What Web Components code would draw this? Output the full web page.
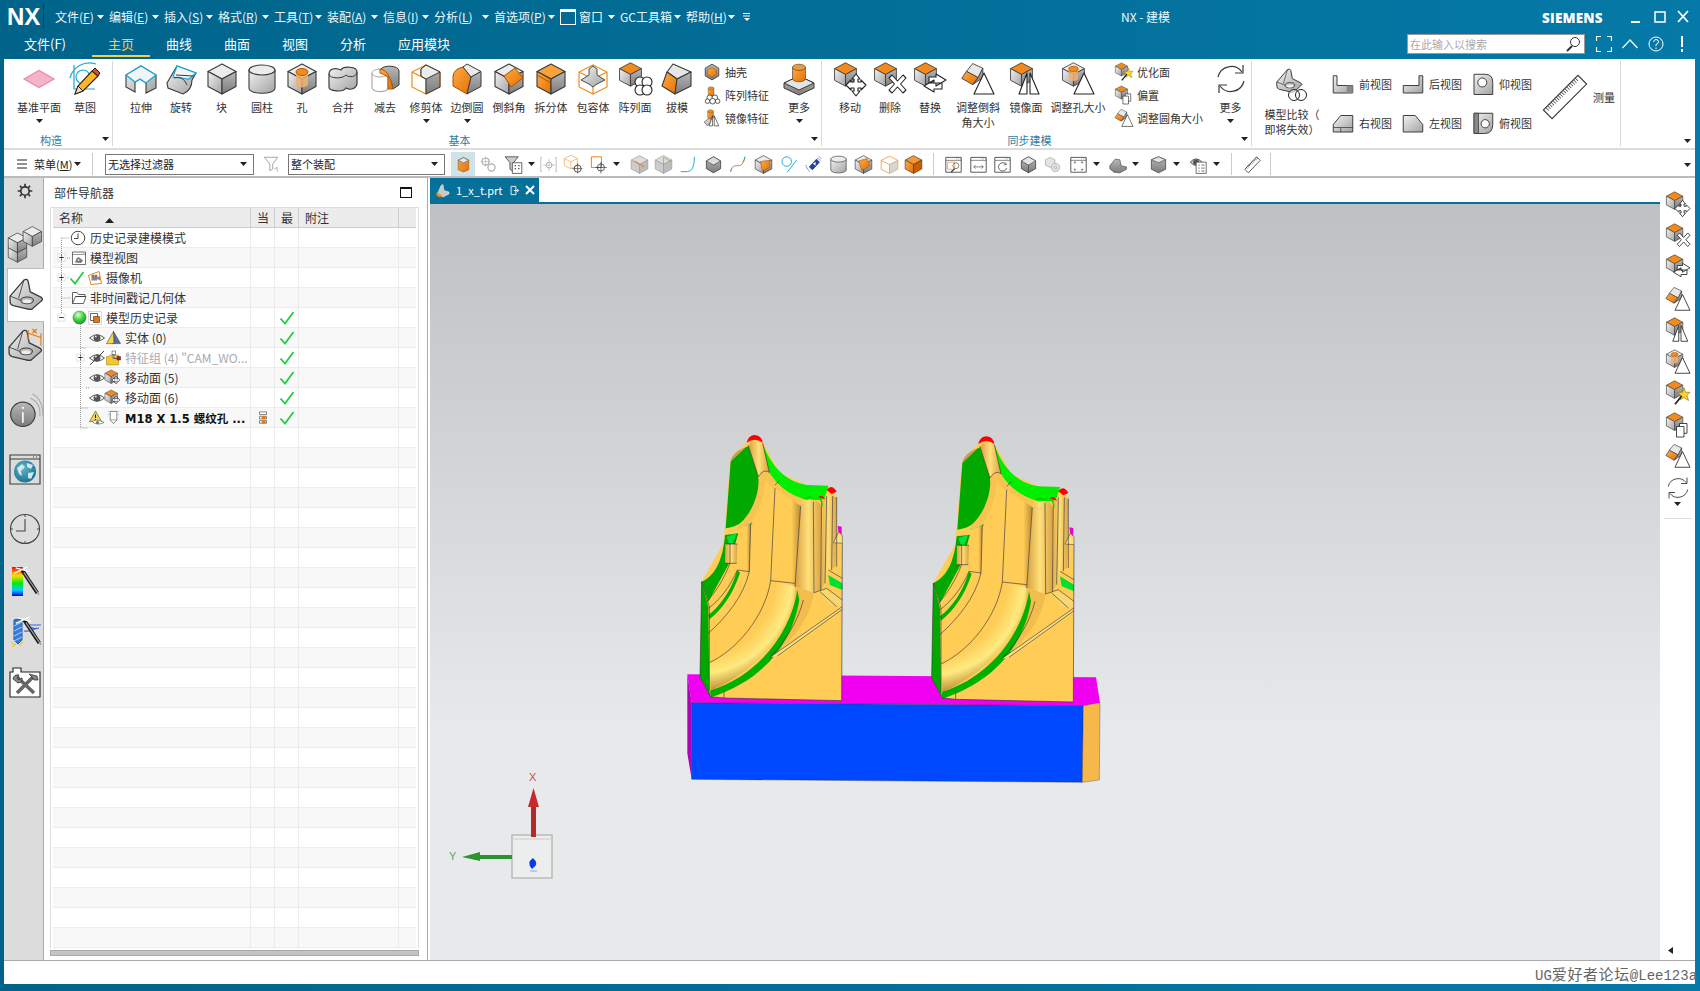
<!DOCTYPE html>
<html lang="zh">
<head>
<meta charset="utf-8">
<title>NX - 建模</title>
<style>
  html, body { margin: 0; height: 991px; overflow: hidden; }
  body { font-family: "Noto Sans CJK SC", "Noto Sans", sans-serif; font-size: 11px; color: #333; }
</style>
</head>
<body>
<nx-window>
  <nx-titlebar slot="top"></nx-titlebar>
  <nx-tabs slot="top"></nx-tabs>
  <nx-ribbon slot="content"></nx-ribbon>
  <nx-selbar slot="content"></nx-selbar>
  <nx-main slot="content"></nx-main>
  <nx-status slot="content"></nx-status>
</nx-window>

<script>
const S = "#3a3a3a";
const DEFS = `<defs>
  <linearGradient id="gl" x1="0" y1="0" x2="1" y2="1"><stop offset="0" stop-color="#f2f2f2"/><stop offset="1" stop-color="#a2a2a2"/></linearGradient>
  <linearGradient id="gr" x1="0" y1="0" x2="0" y2="1"><stop offset="0" stop-color="#b8b8b8"/><stop offset="1" stop-color="#7c7c7c"/></linearGradient>
  <linearGradient id="o" x1="0" y1="0" x2="1" y2="1"><stop offset="0" stop-color="#ffab45"/><stop offset="1" stop-color="#e46f05"/></linearGradient>
  <radialGradient id="ball" cx=".4" cy=".3" r=".8"><stop offset="0" stop-color="#d8ffd0"/><stop offset=".5" stop-color="#3fd33f"/><stop offset="1" stop-color="#0a8a1a"/></radialGradient>
  <linearGradient id="rb" x1="0" y1="0" x2="0" y2="1"><stop offset="0" stop-color="#f00"/><stop offset=".3" stop-color="#fd0"/><stop offset=".55" stop-color="#0e0"/><stop offset=".8" stop-color="#0cf"/><stop offset="1" stop-color="#00d"/></linearGradient>
  <radialGradient id="earth" cx=".4" cy=".35" r=".8"><stop offset="0" stop-color="#5fb4cc"/><stop offset="1" stop-color="#0a6888"/></radialGradient>
</defs>`;

// faces of the isometric cube that most NX icons start from
const cube = (top = "#ececec", left = "url(#gl)", right = "url(#gr)") => `
  <g stroke="${S}" stroke-width="1.1" stroke-linejoin="round">
    <path d="M16 1 30 8.500 16 16 2 8.500Z" fill="${top}"/>
    <path d="M2 8.500 16 16V31L2 23.500Z" fill="${left}"/>
    <path d="M30 8.500 16 16V31L30 23.500Z" fill="${right}"/>
  </g>`;
const ocube = () => cube("#f28a1c");
const mini = (inner) => `<g transform="translate(-1 -1) scale(.78)">${inner}</g>`;
const W = `fill="#fff" stroke="#222" stroke-width="1.1" stroke-linejoin="round"`;
const arrows4 = `<path d="M22 11 26 16H24V19H27V17L32 22 27 27V25H24V28H26L22 33 18 28H20V25H17V27L12 22 17 17V19H20V16H18Z" ${W}/>`;
const cross = `<path d="M15 15 18 12 23.500 18 29 12 32 15 26.500 21 32 27 29 30 23.500 24 18 30 15 27 20.500 21Z" ${W}/>`;
const swap = `<path d="M22 11 32 17 22 23V20H15V14H22ZM20 17 10 23 20 29V26H28V20H20Z" ${W}/>`;
const tri = `<path d="M22 10 32 31H12Z" ${W}/>`;
const tri2 = `<path d="M17 10V31H9ZM20 10V31H29Z" ${W}/>`;
const star = `<path d="M24 9 26 15 32 15 28 19 30 26 24 22 19 25 20 19 15 15 22 15Z" fill="#ffd52a" stroke="#8a6a00" stroke-width=".8"/><path d="M21 20 12 31" stroke="#222" stroke-width="2.400"/>`;
const pages = `<path d="M18 14H28V27H18Z" ${W}/><path d="M14 18H24V32H14Z" ${W}/>`;
const rings = `<g fill="#fff" stroke="#222" stroke-width="1.1"><circle cx="21" cy="19" r="5"/><circle cx="28" cy="19" r="5"/><circle cx="21" cy="27" r="5"/><circle cx="28" cy="27" r="5"/></g>`;
const tilted = `<g stroke="${S}" stroke-width="1.1" stroke-linejoin="round"><path d="M15 2 28 8 22 20 7 12Z" fill="#e8e8e8"/><path d="M7 12 22 20 15 29 1 21Z" fill="url(#o)"/><path d="M22 20 28 8V20L15 29Z" fill="url(#gr)"/></g>`;
const holeCube = `${cube()}<path d="M10 8V22Q16 27 22 22V8Z" fill="#f0b070" opacity=".85"/><ellipse cx="16" cy="9" rx="6" ry="3.500" fill="#f28a1c" stroke="#b35c00"/>`;
const cyl = (f = "url(#gl)", t = "#ececec") => `<path d="M3 7V25C3 32 29 32 29 25V7Z" fill="${f}" stroke="${S}" stroke-width="1.1"/><ellipse cx="16" cy="7" rx="13" ry="5" fill="${t}" stroke="${S}" stroke-width="1.1"/>`;
const bracket = `<path d="M1 17 14 2Q17 0 18 3L20 13 30 18Q33 20 30 22L22 29Q20 30 17 29L4 26Q1 25 1 22Z" fill="url(#gl)" stroke="${S}" stroke-width="1.2" stroke-linejoin="round"/><path d="M1 17 11 21M14 2 9 19" fill="none" stroke="${S}" stroke-width=".8"/><ellipse cx="17" cy="21" rx="6" ry="3.200" fill="#bbb" stroke="${S}"/><ellipse cx="17" cy="22" rx="4" ry="1.800" fill="#eee"/>`;
const cycle = `<path d="M3 14A13.500 13.500 0 0 1 27 9" fill="none" stroke="${S}" stroke-width="1.200"/><path d="M29 18A13.500 13.500 0 0 1 5 23" fill="none" stroke="${S}" stroke-width="1.200"/><path d="M28 2V10H20M4 30V22H12" fill="none" stroke="${S}" stroke-width="1.200"/>`;
const eye = `<path d="M1 16Q16 3 31 16 16 29 1 16Z" fill="#fff" stroke="#444" stroke-width="1.800"/><circle cx="16" cy="16" r="7" fill="#555"/><circle cx="13.500" cy="13" r="2" fill="#ddd"/>`;
const check = `<path d="M3 17 12 27 29 4" fill="none" stroke="#22cc44" stroke-width="3.500"/>`;
const wand = `<path d="M10 3 27 29" stroke="#111" stroke-width="4"/><path d="M12 6 29 31" stroke="#999" stroke-width="1.500"/><path d="M10 3 3 1M10 3 16 0M10 3 1 7M10 3 18 5" stroke="#fff" stroke-width="1.500"/>`;
const panel = (inner) => `<path d="M3 4H29V29H3Z" fill="#fff" stroke="${S}" stroke-width="1.400"/><path d="M3 9H29M21 6.500H22M24 6.500H25M27 6.500H28" stroke="${S}"/>${inner}`;
const view = (d, extra = "") => `<path d="${d}" fill="url(#gl)" stroke="${S}" stroke-width="1.300" stroke-linejoin="round"/>${extra}`;
const wire = (c = "#f08a1c") => `<path d="M16 2 30 9V24L16 31 2 24V9ZM2 9 16 16 30 9M16 16V31" fill="none" stroke="${c}" stroke-width="1.200"/>`;

const ICONS = {
  datum: `<path d="M1 16 16 7.500 31 16 16 24.500Z" fill="#f6b2ca" stroke="#e48aad" stroke-width="1.200"/>`,
  sketch: `<g fill="none" stroke="#19a9d6" stroke-width="1.200"><path d="M5 2V26H26M1 15A20 20 0 0 1 27 1"/><circle cx="14" cy="14" r="7" fill="#fff"/></g><path d="M6 31 9 23 23 8 29 13 14 28Z" fill="#ffb52a" stroke="#222" stroke-width="1.100"/><path d="M6 31 9 23 14 28Z" fill="#f7dfb0" stroke="#222"/><path d="M23 8 26 5 31 10 29 13Z" fill="#d84a2a" stroke="#222"/>`,
  extrude: `<path d="M1 12V24L10 29V19L15 16 21 20V30L31 25V12L16 3Z" fill="url(#gl)" stroke="${S}" stroke-width="1.100"/><path d="M1 12 16 3 31 12 21 20 15 16 10 19Z" fill="#f0f6f8" stroke="#19a9d6" stroke-width="1.300"/>`,
  revolve: `<path d="M2 20 12 3 31 10 27 17Q27 27 18 31L3 25Z" fill="url(#gl)" stroke="${S}" stroke-width="1.100"/><path d="M8 14 12 3 31 10 24 16Z" fill="#f0f6f8" stroke="#19a9d6" stroke-width="1.200"/><path d="M11 12 28 13M9 15Q18 12 22 22" fill="none" stroke="${S}"/>`,
  block: cube(),
  cylinder: cyl(),
  hole: holeCube,
  unite: `<path d="M2 11V24C2 28 16 30 19 25 24 28 30 25 30 20V9C30 3 16 3 14 7 8 4 2 6 2 11Z" fill="url(#gl)" stroke="${S}" stroke-width="1.200"/><path d="M2 11C2 16 16 16 19 12 22 15 30 14 30 9" fill="none" stroke="${S}"/>`,
  subtract: `<path d="M3 10V24C3 30 19 30 19 25V12" fill="#fff" stroke="#aaa" stroke-width="1.200"/><ellipse cx="11" cy="10" rx="8" ry="4" fill="none" stroke="#aaa"/><path d="M12 6C14 2 30 2 30 8V22L24 26Q22 12 12 8Z" fill="url(#gr)" stroke="${S}"/><path d="M11 6Q20 6 24 26H19V14Q14 11 11 10Z" fill="url(#o)" stroke="#b35c00"/>`,
  trim: `${wire()}<path d="M16 2 30 9V24L16 31V16L11 13V6Z" fill="url(#gr)" stroke="${S}"/><path d="M16 2 30 9 16 16 11 13V6Z" fill="#ececec" stroke="${S}"/>`,
  edgeblend: `<path d="M2 23V13Q3 6 12 4L20 14 16 31Z" fill="url(#o)" stroke="#a85200"/><path d="M12 4 16 1 30 8.500 20 14Z" fill="#ececec" stroke="${S}"/><path d="M20 14 30 8.500V23.500L16 31Z" fill="url(#gr)" stroke="${S}"/>`,
  chamfer: `${cube()}<path d="M11 13 22 5 30 15 18 24Z" fill="url(#o)" stroke="#a85200"/>`,
  split: `${cube("#f8a33a", "url(#o)", "url(#gr)")}<path d="M2 12 16 20" fill="none" stroke="#a85200"/>`,
  wrap: `${wire()}<path d="M12 6 16 3 20 6V12L28 17 20 21 16 24 12 21 4 17 12 12Z" fill="url(#gl)" stroke="${S}" stroke-width=".9"/>`,
  patternface: `${mini(ocube())}${rings}`,
  draft: `<g stroke="${S}" stroke-width="1.100" stroke-linejoin="round"><path d="M12 1 30 9 16 16 6 9Z" fill="#e6e6e6"/><path d="M6 9 16 16 14 31 1 23Z" fill="url(#o)"/><path d="M30 9V23L14 31 16 16Z" fill="url(#gr)"/></g>`,
  shell: `<path d="M16 2 28 9V23L16 30 4 23V9Z" fill="url(#gr)" stroke="${S}" stroke-width="1.500"/><path d="M16 8 24 12V20L16 25 8 20V12Z" fill="url(#o)" stroke="#a85200"/>`,
  patternfeat: `<g transform="translate(8 0) scale(.4 .6)">${cyl("url(#o)", "#f28a1c")}</g><g fill="#fff" stroke="#222" stroke-width="1.300"><circle cx="12" cy="21" r="5"/><circle cx="21" cy="21" r="5"/><circle cx="8" cy="27" r="4"/><circle cx="17" cy="27" r="5"/><circle cx="26" cy="27" r="4"/></g>`,
  mirrorfeat: `<g transform="translate(7 0) scale(.4 .6)">${cyl("url(#o)", "#f28a1c")}</g><path d="M2 23 12 16 16 22 8 30Z" fill="url(#gl)" stroke="${S}"/><path d="M17 12V30H11ZM20 12V30H28Z" ${W}/>`,
  more: `<path d="M16 13 31 20V25L16 32 1 25V20Z" fill="url(#gr)" stroke="${S}"/><path d="M16 13 31 20 16 27 1 20Z" fill="#e4e4e4" stroke="${S}"/><g transform="translate(8 0) scale(.5 .62)">${cyl("url(#o)", "#f59a30")}</g>`,
  move: mini(ocube()) + arrows4,
  del: mini(ocube()) + cross,
  replace: mini(ocube()) + swap,
  chamsize: mini(tilted) + tri,
  mirrorface: mini(ocube()) + tri2,
  holesize: mini(holeCube) + tri,
  optimize: mini(ocube()) + star,
  offset: mini(ocube()) + pages,
  blendsize: mini(tilted) + tri,
  cycle,
  compare: `<g transform="translate(0 -2) scale(.82)">${bracket}</g><g fill="none" stroke="#222" stroke-width="1"><circle cx="18" cy="25" r="5.500" fill="#fff" fill-opacity=".6"/><circle cx="25" cy="25" r="5.500"/></g>`,
  vfront: view("M3 5H8V18H29V28H3Z", `<path d="M21 18H29V28H21Z" fill="#888"/>`),
  vback: view("M24 5H29V28H3V18H24Z"),
  vbottom: view("M4 3H19Q29 3 29 14V30H4Z", `<circle cx="15" cy="14" r="6" fill="#fff" stroke="${S}" stroke-width="1.300"/>`),
  vright: view("M3 18 13 6H29V28H3Z", `<path d="M3 22H29M13 22V28" stroke="${S}"/>`),
  vleft: view("M3 6H19L29 18V28H3Z"),
  vtop: view("M4 3H29V18Q29 30 18 30H4Z", `<path d="M4 3H10V30H4Z" fill="#888" stroke="${S}"/><circle cx="19" cy="17" r="5.500" fill="#fff" stroke="${S}" stroke-width="1.300"/>`),
  ruler: `<path d="M1 25 25 1 31 7 7 31Z" fill="#fff" stroke="${S}" stroke-width=".8"/><path d="M3.500 24.500 24.500 3.500" fill="none" stroke="${S}" stroke-width="3" stroke-dasharray=".5 1.200"/>`,
  filt: `<path d="M4 4H28L19 16V25L14 28V16Z" fill="#fff" stroke="#999" stroke-width="1.500"/><path d="M22 25 27 22V30" fill="none" stroke="#999" stroke-width="1.300"/>`,
  selcube: `<path d="M16 3 26 8V26L16 30 6 26V8Z" fill="url(#o)" stroke="#a85200"/><path d="M6 8 16 3 26 8 16 13Z" fill="#e8e8e8" stroke="${S}"/><path d="M6 14 16 19 26 14" fill="none" stroke="#888"/>`,
  link: `<g fill="none" stroke="#aaa" stroke-width="2"><circle cx="11" cy="11" r="6"/><circle cx="21" cy="21" r="6"/></g><path d="M11 3V19M3 11H19" stroke="#aaa"/>`,
  filtgrid: `<path d="M2 3H24L16 13V28L10 24V13Z" fill="#ccc" stroke="${S}" stroke-width="1.300"/><path d="M14 13H30V31H14Z" fill="#fff" stroke="${S}" stroke-width="1.300"/><path d="M18 18H20M24 18H26M18 23H20M24 23H26" stroke="${S}" stroke-width="2"/>`,
  snapdis: `<path d="M5 4H3V28H5M27 4H29V28H27" fill="none" stroke="#bbb" stroke-width="1.500"/><circle cx="17" cy="17" r="5" fill="none" stroke="#aaa" stroke-width="1.500"/><path d="M17 7V27M7 17H27" stroke="#aaa"/>`,
  wiretarget: `${mini(wire())}<circle cx="23" cy="23" r="6" fill="none" stroke="#222" stroke-width="1.200"/><path d="M23 14V31M14 23H31" stroke="#222"/>`,
  squaretarget: `<path d="M4 3H21V21H4Z" fill="#fff" stroke="#e8750a" stroke-width="1.500"/><circle cx="20" cy="21" r="6" fill="none" stroke="#222" stroke-width="1.200"/><path d="M20 12V31M11 21H30" stroke="#222"/>`,
  greycut: `${cube("#ddd", "#ccc", "#bbb").replaceAll(S, "#999")}<path d="M8 10 24 20" stroke="#e8750a" stroke-width="1.500"/>`,
  greywire: `${cube("#ddd", "#ccc", "#bbb").replaceAll(S, "#999")}<path d="M16 16V4L28 11" fill="none" stroke="#e8750a"/>`,
  curve: `<path d="M3 28H14Q26 28 26 3" fill="none" stroke="#19a9d6" stroke-width="1.600"/>`,
  plaincube: `<path d="M16 3 28 10V23L16 30 4 23V10Z" fill="url(#gr)" stroke="${S}" stroke-width="1.300"/><path d="M16 3 28 10 16 17 4 10Z" fill="#ddd" stroke="${S}"/>`,
  scurve: `<path d="M3 28Q4 17 14 18 24 20 27 3" fill="none" stroke="#e8750a" stroke-width="1.500"/><path d="M3 28Q3 24 5 22M23 12Q26 8 27 3" fill="none" stroke="#19a9d6" stroke-width="1.500"/>`,
  facecube: `${cube()}<path d="M11 11 26 9 27 21 14 27Z" fill="url(#o)" stroke="#a85200"/>`,
  ringline: `<circle cx="13" cy="11" r="8" fill="none" stroke="#19a9d6" stroke-width="1.600"/><path d="M14 29 30 8" stroke="#19a9d6" stroke-width="1.600"/>`,
  bluedia: `<path d="M9 20 21 7 26 12 14 25Z" fill="#2244aa" stroke="#112"/><path d="M15 14 20 12 19 18Z" fill="#fff"/><path d="M5 22 9 28M22 5 28 9M3 17 5 22M25 3 29 6" stroke="#4466cc" stroke-width="1.500" stroke-dasharray="2 1"/>`,
  cylplain: cyl(),
  cubeo2: `${cube()}<path d="M8 10 22 6 27 18 13 26Z" fill="url(#o)" stroke="#a85200"/>`,
  cubewire: `${wire()}<path d="M16 16 30 9V24L16 31Z" fill="#bbb" fill-opacity=".6"/>`,
  cubesolid: `${cube("#f59a30", "url(#o)", "#c95f00")}`,
  pmag: panel(`<path d="M6 12H18V24H6Z" fill="#fff" stroke="#e8750a"/><circle cx="20" cy="18" r="5" fill="none" stroke="${S}"/><path d="M18 23 12 29" stroke="${S}" stroke-width="2"/>`),
  pfit: panel(`<path d="M8 20H24M8 20 11 17M8 20 11 23M24 20 21 17M24 20 21 23" fill="none" stroke="${S}"/>`),
  prot: panel(`<path d="M22 16A7 7 0 1 0 23 22" fill="none" stroke="${S}" stroke-width="1.300"/><path d="M20 12 23 16 18 17" fill="none" stroke="${S}"/>`),
  gcube: `<path d="M16 3 28 10V23L16 30 4 23V10Z" fill="url(#gr)" stroke="${S}" stroke-width="1.300"/><path d="M16 3 28 10 16 17 4 10Z" fill="#e6e6e6" stroke="${S}"/><path d="M16 17V30" stroke="${S}"/>`,
  gears: `<g fill="#e4e4e4" stroke="#aaa" stroke-width="1.300"><path d="M4 8 12 4 20 8V17L12 21 4 17Z"/><circle cx="21" cy="21" r="7"/><circle cx="21" cy="21" r="2.500"/></g>`,
  pframe: panel(`<path d="M9 14V12H12M23 14V12H20M9 23V25H12M23 23V25H20" fill="none" stroke="${S}" stroke-width="1.300"/>`),
  bracket2: `<path d="M3 23V18L12 7 20 8 22 18 31 20V24L20 30 10 29Z" fill="url(#gr)" stroke="${S}"/>`,
  cylshade: `<path d="M16 3 28 8V24L16 30 4 24V8Z" fill="url(#gr)" stroke="${S}" stroke-width="1.200"/><path d="M16 3 28 8 16 13 4 8Z" fill="#e4e4e4" stroke="${S}"/>`,
  eyelist: `<path d="M2 12Q12 1 22 12 12 23 2 12Z" fill="#ccc" stroke="${S}" stroke-width="1.300"/><circle cx="12" cy="12" r="5" fill="#555"/><path d="M12 12H29V31H12Z" fill="#fff" stroke="${S}" stroke-width="1.200"/><path d="M16 17H18M21 17H26M16 22H18M21 22H26M16 27H18M21 27H26" stroke="${S}" stroke-width="1.300"/>`,
  ruler2: `<path d="M3 24 23 3 29 9 9 30Z" fill="#fff" stroke="${S}" stroke-width="1.400"/><path d="M6 22 24 5" fill="none" stroke="${S}" stroke-width="3" stroke-dasharray="1 2"/>`,
  gear: `<circle cx="16" cy="16" r="7.500" fill="none" stroke="#333" stroke-width="3"/><path d="M16 3V8M16 24V29M3 16H8M24 16H29M7 7 10 10M22 22 25 25M25 7 22 10M10 22 7 25" stroke="#333" stroke-width="3"/>`,
  assembly: `<g transform="translate(-1 14) scale(.62)">${cube()}</g><g transform="translate(-1 5) scale(.62)">${cube()}</g><g transform="translate(13 -1) scale(.62)">${cube()}</g>`,
  bracket,
  bracketdim: `${bracket}<path d="M19 1V10M31 4V16M19 4 31 8M23 0 27 4M27 0 23 4" fill="none" stroke="#e8750a" stroke-width="1"/>`,
  info: `<path d="M21 5Q31 9 30 22M23 1Q33 6 33 22" fill="none" stroke="#aaa"/><circle cx="14" cy="20" r="11.500" fill="url(#gr)" stroke="#444" stroke-width="1.200"/><path d="M14 18V28" stroke="#fff" stroke-width="1.500"/><circle cx="14" cy="14" r="1" fill="#fff"/>`,
  globe: `<path d="M1 2H31V31H1Z" fill="#dcdcdc" stroke="${S}" stroke-width="1.100"/><path d="M1 6H31M24 4H25M27 4H28" stroke="${S}"/><circle cx="16" cy="18.500" r="11" fill="url(#earth)"/><path d="M8 15 13 11 16 14 12 18 13 23 10 21ZM18 10 24 12 22 16 18 14ZM19 20 25 19 22 26 19 25Z" fill="#d6e6e8"/>`,
  clock: `<circle cx="16" cy="16" r="14.500" fill="none" stroke="#444" stroke-width="1.100"/><path d="M16 6V18H7" fill="none" stroke="#444" stroke-width="1.100"/><path d="M16 1.500V4M16 28V30.500M1.500 16H4M28 16H30.500" stroke="#444"/>`,
  rainbow: `<path d="M3 1H14V30H3Z" fill="url(#rb)"/><g transform="translate(4 1) scale(.9)">${wand}</g>`,
  mill: `<path d="M5 4Q9 2 13 4V24L9 28 5 24Z" fill="#3a7ad8" stroke="#2458a8"/><path d="M5 10 13 6M5 15 13 11M5 20 13 16M5 25 13 21" stroke="#a8d0ff"/><path d="M17 9H32M17 9Q24 14 30 12M15 15Q22 16 28 12" fill="none" stroke="#3a6ad0" stroke-width="1.200"/><path d="M2 26 6 29M14 26 10 30M3 31 7 28" stroke="#e8d020" stroke-width="1.200"/><g transform="translate(6 1) scale(.9)">${wand}</g>`,
  tools: `<path d="M1 6H4V2H12V6H31V31H1Z" fill="#fff" stroke="#222" stroke-width="1.100"/><path d="M7 10 25 27M25 10 8 27" stroke="#666" stroke-width="3.600"/><path d="M4 13Q5 8 10 9L8 12 10 14 13 12Q14 16 9 17Z" fill="#888" stroke="#222" stroke-width=".7"/><path d="M20 8 28 10 29 14 25 14 23 11Z" fill="#888" stroke="#222" stroke-width=".7"/>`,
  tclock: `<circle cx="16" cy="16" r="13.500" fill="#fff" stroke="#333" stroke-width="1.800"/><path d="M16 7V17H8" fill="none" stroke="#333" stroke-width="1.800"/>`,
  tview: panel(`<path d="M8 25 11 17 15 14 19 17 24 21 20 26Z" fill="#777"/><circle cx="15" cy="20" r="2" fill="#ddd"/>`),
  plus: `<path d="M3 3H29V29H3Z" fill="#fff" stroke="#ccc" stroke-width="2"/><path d="M8 16H24M16 8V24" stroke="#111" stroke-width="3"/>`,
  minus: `<path d="M3 3H29V29H3Z" fill="#fff" stroke="#ccc" stroke-width="2"/><path d="M8 16H24" stroke="#111" stroke-width="3"/>`,
  check,
  cam: `<path d="M3 11 24 3 29 27 8 29Z" fill="#fff" stroke="#e8750a" stroke-width="1.800"/><path d="M9 13H20V21H9Z" fill="#888"/><circle cx="12" cy="12" r="3" fill="#777"/><circle cx="18" cy="12" r="3" fill="#777"/><path d="M20 15 26 12V21L20 18Z" fill="#888"/>`,
  folder: `<path d="M3 27V5H12L15 9H28V13H9L3 27H25L30 13H9" fill="#fff" stroke="#333" stroke-width="1.500" stroke-linejoin="round"/>`,
  ball: `<circle cx="16" cy="16" r="14" fill="url(#ball)" stroke="#3a7a3a"/>`,
  feat: `<path d="M3 3H29V29H3Z" fill="#fff" stroke="#888" stroke-dasharray="2 1"/><path d="M7 7H21V21H7Z" fill="#fff" stroke="#333" stroke-width="1.500"/><path d="M13 13H25V25H13Z" fill="#e8750a" stroke="#333" stroke-width="1.200"/>`,
  eye,
  eyeoff: `${eye}<path d="M2 30 30 2" stroke="#444" stroke-width="2"/>`,
  body: `<path d="M16 3 31 29H14Z" fill="#5a6aa8" stroke="#222"/><path d="M16 3 1 29H17Z" fill="#f7d64a" stroke="#222"/>`,
  fgroup: `<path d="M3 30V13H8L10 10H27V30Z" fill="#f6c62a" stroke="#9a7400"/><path d="M14 2H21V9H14ZM16 9V17H24" fill="#fff" stroke="#222"/><path d="M24 13H31V20H24Z" fill="#e01010" stroke="#222"/><path d="M18 10V16H23" fill="none" stroke="#1030e0" stroke-width="1.500"/>`,
  mvface: `<g transform="translate(-2 -1) scale(.9)">${ocube()}</g><path d="M22 12 25 15H23.500V18H26.500V16.500L30 20 26.500 23.500V22H23.500V25H25L22 28 19 25H20.500V22H17.500V23.500L14 20 17.500 16.500V18H20.500V15H19Z" ${W}/>`,
  warn: `<path d="M13 2 25 23H1Z" fill="#f7d64a" stroke="#444" stroke-width="1.200"/><path d="M13 9V16M13 18V20" stroke="#222" stroke-width="2"/><path d="M6 23Q16 17 30 25 16 32 6 23Z" fill="#fff" stroke="#555" stroke-width="1.300"/><circle cx="17" cy="25" r="3" fill="#666"/>`,
  holetool: `<path d="M9 3H23V21L16 29 9 21Z" fill="#fff" stroke="#444" stroke-width="1.300"/><path d="M5 3H7M25 3H27M5 10H7M25 10H27M9 21H23" stroke="#444"/>`,
  tree: `<path d="M8 2H24V8H8ZM8 12H24V18H8ZM8 22H24V28H8Z" fill="#fff" stroke="#333" stroke-width="1.300"/><path d="M13 12H22V18H13ZM13 22H22V28H13Z" fill="#e8750a"/>`,
  newwin: `<path d="M6 4H20V28H6Z" fill="none" stroke="#fff" stroke-width="2.500"/><path d="M14 16H28M28 16 23 11M28 16 23 21" fill="none" stroke="#fff" stroke-width="2.500"/>`,
  partfile: `<path d="M5 24 12 7 16 5 18 17 28 20V24L16 30Z" fill="#c9c9c9" stroke="#eee"/><path d="M3 20 14 27 10 31 3 27Z" fill="#f28a1c"/>`
};

class NxIcon extends HTMLElement {
  static get observedAttributes() { return ["name", "size", "h"]; }
  attributeChangedCallback() { if (this.shadowRoot) this.render(); }
  connectedCallback() {
    if (!this.shadowRoot) this.attachShadow({ mode: "open" });
    this.render();
  }
  render() {
    const size = this.getAttribute("size") || 32;
    const h = this.getAttribute("h") || size;
    this.shadowRoot.innerHTML = `
      <style>:host { display: inline-block; width: ${size}px; height: ${h}px; flex: none; line-height: 0; } svg { display: block; overflow: visible; }</style>
      <svg width="${size}" height="${h}" viewBox="0 0 32 32" preserveAspectRatio="none">${DEFS}
        ${ICONS[this.getAttribute("name")] || ""}</svg>`;
  }
}
customElements.define("nx-icon", NxIcon);

// little black triangle used everywhere a button drops down
const drop = (color = "#222") => `<svg width="7" height="4" viewBox="0 0 7 4" style="display:block;flex:none"><path d="M0 0H7L3.500 4Z" fill="${color}"/></svg>`;

class NxWindow extends HTMLElement {
  constructor() {
    super();
    this.attachShadow({ mode: "open" }).innerHTML = `
      <style>
        :host { display: block; width: 1700px; height: 991px; background: linear-gradient(90deg, #00648a, #0579a7); }
        .content { margin: 0 5px 0 4px; height: 925px; background: #fff; display: flex; flex-direction: column; }
      </style>
      <slot name="top"></slot>
      <div class="content"><slot name="content"></slot></div>`;
  }
}
customElements.define("nx-window", NxWindow);

class NxMenu extends HTMLElement {
  constructor() {
    super();
    this.attachShadow({ mode: "open" }).innerHTML = `
      <style>
        :host { display: inline-flex; align-items: center; justify-content: space-between; flex: none; padding-right: 5px; box-sizing: border-box; color: #eef6fa; font-size: 12px; white-space: nowrap; }
      </style>
      <span><slot></slot></span>${drop("#fff")}`;
  }
  connectedCallback() { this.style.width = this.getAttribute("w") + "px"; }
}
customElements.define("nx-menu", NxMenu);

class NxTitlebar extends HTMLElement {
  constructor() {
    super();
    const menus = [["文件", "F", 54], ["编辑", "E", 55], ["插入", "S", 54], ["格式", "R", 56], ["工具", "T", 53], ["装配", "A", 56], ["信息", "I", 51], ["分析", "L", 60], ["首选项", "P", 66]];
    this.attachShadow({ mode: "open" }).innerHTML = `
      <style>
        :host { display: flex; align-items: center; height: 33px; color: #fff; position: relative; }
        .logo { font: bold 24px "Liberation Sans", sans-serif; margin-left: 7px; width: 36px; letter-spacing: -.2px; }
        .bar { width: 1px; height: 23px; background: #0c3f57; margin-right: 11px; }
        .win { width: 16px; height: 16px; border: 1px solid #fff; box-sizing: border-box; margin-right: 3px; border-top-width: 3px; flex: none; }
        .title { position: absolute; left: 1121px; top: 8px; font-size: 12px; color: #eef6fa; white-space: nowrap; }
        .siemens { position: absolute; left: 1542px; top: 9px; font: 800 13.500px "Open Sans", sans-serif; letter-spacing: .2px; }
        .ctl { position: absolute; top: 10px; }
        .eq { margin-left: 3px; }
      </style>
      <div class="logo">NX</div><div class="bar"></div>
      ${menus.map(m => `<nx-menu w="${m[2]}">${m[0]}(<u>${m[1]}</u>)</nx-menu>`).join("")}
      <div class="win"></div>
      <nx-menu w="41">窗口</nx-menu><nx-menu w="66">GC工具箱</nx-menu><nx-menu w="54">帮助(<u>H</u>)</nx-menu>
      <svg class="eq" width="8" height="8" viewBox="0 0 8 8"><path d="M0 .5H7M0 3H7" stroke="#fff"/><path d="M1 5H7L4 8Z" fill="#fff"/></svg>
      <div class="title">NX - 建模</div>
      <div class="siemens">SIEMENS</div>
      <svg class="ctl" style="left:1631px" width="10" height="14"><path d="M0 12H9" stroke="#fff" stroke-width="2"/></svg>
      <svg class="ctl" style="left:1654px" width="12" height="14"><path d="M1 2H11V12H1Z" fill="none" stroke="#fff" stroke-width="1.500"/></svg>
      <svg class="ctl" style="left:1677px" width="12" height="14"><path d="M1 1 11 12M11 1 1 12" stroke="#fff" stroke-width="1.800"/></svg>`;
  }
}
customElements.define("nx-titlebar", NxTitlebar);

class NxTabs extends HTMLElement {
  constructor() {
    super();
    const tabs = [["文件(F)", 24, 42], ["主页", 108, 26], ["曲线", 166, 26], ["曲面", 224, 26], ["视图", 282, 26], ["分析", 340, 26], ["应用模块", 398, 52]];
    let x = 0;
    const html = tabs.map(([t, l, w], i) => {
      const gap = l - x;
      x = l + w;
      return `<span class="${i === 1 ? "on" : ""}" style="margin-left:${gap}px;width:${w}px">${t}</span>`;
    }).join("");
    this.attachShadow({ mode: "open" }).innerHTML = `
      <style>
        :host { display: flex; align-items: center; height: 26px; color: #fff; font-size: 13px; white-space: nowrap; position: relative; box-sizing: border-box; padding-bottom: 5px; }
        span { flex: none; line-height: 22px; }
        .on { color: #ffc94d; position: relative; }
        .on::after { content: ""; position: absolute; left: -16px; right: -16px; bottom: -2px; height: 2px; background: #ffc94d; }
        .search { position: absolute; left: 1407px; top: 1px; width: 178px; height: 20px; background: #fff; border: 1px solid #999; box-sizing: border-box; color: #aaa; font-size: 11px; line-height: 18px; padding-left: 2px; }
        .search svg { position: absolute; right: 3px; top: 1px; }
        .r { position: absolute; top: 3px; }
      </style>
      ${html}
      <div class="search">在此输入以搜索<svg width="16" height="16" viewBox="0 0 16 16"><circle cx="10" cy="6" r="4.500" fill="#fff" stroke="#333"/><path d="M7 10 2 15" stroke="#333" stroke-width="2"/></svg></div>
      <svg class="r" style="left:1596px" width="16" height="16" fill="none" stroke="#fff" stroke-width="1.200"><path d="M.5 5V.5H5M11 .5H15.500V5M.5 11V15.500H5M11 15.500H15.500V11"/></svg>
      <svg class="r" style="left:1622px" width="16" height="16" fill="none" stroke="#fff" stroke-width="1.200"><path d="M.5 12 8 4 15.500 12"/></svg>
      <svg class="r" style="left:1648px" width="16" height="16" fill="none" stroke="#fff"><circle cx="8" cy="8" r="7"/><path d="M5.500 6Q6 3.500 8 3.500 10.500 3.500 10.500 6 10.500 7.500 8 8.500V10M8 11.500V13"/></svg>
      <svg class="r" style="left:1680px" width="4" height="16" stroke="#fff" stroke-width="2"><path d="M2 0V11M2 13V16"/></svg>`;
  }
}
customElements.define("nx-tabs", NxTabs);

// big ribbon button: icon above a centred caption
class NxRbtn extends HTMLElement {
  constructor() {
    super();
    this.attachShadow({ mode: "open" }).innerHTML = `
      <style>
        :host { display: flex; flex-direction: column; align-items: center; flex: none; padding-top: 2px; box-sizing: border-box; }
        .t { margin-top: 0; line-height: 15px; text-align: center; color: #333; font-size: 11px; }
        svg { margin-top: 4px; }
        nx-icon { margin-bottom: 5px; }
      </style>
      <nx-icon></nx-icon><div class="t"><slot></slot></div>`;
  }
  connectedCallback() {
    this.style.width = this.getAttribute("w") + "px";
    const ic = this.shadowRoot.querySelector("nx-icon");
    ic.setAttribute("name", this.getAttribute("icon"));
    ic.setAttribute("size", this.getAttribute("size") || 32);
    if (this.hasAttribute("pt")) this.style.paddingTop = this.getAttribute("pt") + "px";
    if (this.hasAttribute("arrow")) this.shadowRoot.querySelector(".t").insertAdjacentHTML("afterend", drop());
  }
}
customElements.define("nx-rbtn", NxRbtn);

class NxSbtn extends HTMLElement {
  constructor() {
    super();
    this.attachShadow({ mode: "open" }).innerHTML = `
      <style>
        :host { display: flex; align-items: center; gap: 4px; height: 23px; white-space: nowrap; color: #333; font-size: 11px; }
      </style>
      <nx-icon size="18"></nx-icon><slot></slot>`;
  }
  connectedCallback() {
    this.shadowRoot.querySelector("nx-icon").setAttribute("name", this.getAttribute("icon"));
  }
}
customElements.define("nx-sbtn", NxSbtn);

class NxGroup extends HTMLElement {
  constructor() {
    super();
    this.attachShadow({ mode: "open" }).innerHTML = `
      <style>
        :host { display: flex; flex-direction: column; flex: none; box-sizing: border-box; border-right: 1px solid #d8d8d8; height: 85px; margin-top: 2px; position: relative; }
        .row { display: flex; flex: 1; }
        .label { position: absolute; left: 0; right: 0; bottom: -2px; height: 15px; line-height: 15px; text-align: center; color: #2f7da3; font-size: 11px; }
        .more { position: absolute; right: 3px; bottom: 5px; }
      </style>
      <div class="row"><slot></slot></div>`;
  }
  connectedCallback() {
    this.style.width = this.getAttribute("w") + "px";
    this.style.paddingLeft = (this.getAttribute("pl") || 8) + "px";
    const r = this.shadowRoot;
    if (this.hasAttribute("label")) r.querySelector(".row").insertAdjacentHTML("afterend", `<div class="label" style="padding-right:${this.getAttribute("lr") || 0}px">${this.getAttribute("label")}</div>`);
    if (this.hasAttribute("more")) r.querySelector(".row").insertAdjacentHTML("afterend", `<div class="more">${drop()}</div>`);
  }
}
customElements.define("nx-group", NxGroup);

class NxRibbon extends HTMLElement {
  constructor() {
    super();
    const b = (icon, t, w, arrow) => `<nx-rbtn icon="${icon}" w="${w}" ${arrow ? "arrow" : ""}>${t}</nx-rbtn>`;
    const col = (w, items) => `<div style="width:${w}px;flex:none;padding:0 0 0 5px;margin-top:-1px;box-sizing:border-box">${items.map(i => `<nx-sbtn icon="${i[0]}">${i[1]}</nx-sbtn>`).join("")}</div>`;
    this.attachShadow({ mode: "open" }).innerHTML = `
      <style>
        :host { display: flex; height: 89px; flex: none; border-bottom: 2px solid #dcdcdc; box-sizing: content-box; position: relative; }
        .views { display: grid; grid-template-columns: 70px 70px 70px; grid-auto-rows: 39px; padding: 3px 0 0 9px; flex: none; }
        .v { display: flex; align-items: center; gap: 4px; white-space: nowrap; font-size: 11px; color: #333; }
        .ruler { display: flex; align-items: center; gap: 5px; height: 72px; font-size: 11px; color: #333; flex: none; padding-left: 1px; }
        .end { position: absolute; right: 4px; bottom: 5px; }
      </style>
      <nx-group w="109" pl="12" label="构造" more lr="14">
        ${b("datum", "基准平面", 46, 1)}${b("sketch", "草图", 46)}
      </nx-group>
      <nx-group w="709" label="基本" more lr="15">
        ${b("extrude", "拉伸", 40)}${b("revolve", "旋转", 40)}${b("block", "块", 41)}${b("cylinder", "圆柱", 40)}${b("hole", "孔", 40)}
        ${b("unite", "合并", 42)}${b("subtract", "减去", 42)}${b("trim", "修剪体", 40, 1)}${b("edgeblend", "边倒圆", 42, 1)}${b("chamfer", "倒斜角", 42)}
        ${b("split", "拆分体", 42)}${b("wrap", "包容体", 42)}${b("patternface", "阵列面", 42)}${b("draft", "拔模", 42)}
        ${col(79, [["shell", "抽壳"], ["patternfeat", "阵列特征"], ["mirrorfeat", "镜像特征"]])}
        ${b("more", "更多", 44, 1)}
      </nx-group>
      <nx-group w="430" label="同步建模" more lr="14">
        ${b("move", "移动", 40)}${b("del", "删除", 40)}${b("replace", "替换", 40)}${b("chamsize", "调整倒斜<br>角大小", 56)}${b("mirrorface", "镜像面", 40)}${b("holesize", "调整孔大小", 64)}
        ${col(100, [["optimize", "优化面"], ["offset", "偏置"], ["blendsize", "调整圆角大小"]])}
        ${b("cycle", "更多", 41, 1)}
      </nx-group>
      <nx-group w="369" pl="10">
        <nx-rbtn icon="compare" w="60" pt="9">模型比较（<br>即将失效）</nx-rbtn>
        <div class="views">
          <div class="v"><nx-icon name="vfront" size="24"></nx-icon>前视图</div>
          <div class="v"><nx-icon name="vback" size="24"></nx-icon>后视图</div>
          <div class="v"><nx-icon name="vbottom" size="24"></nx-icon>仰视图</div>
          <div class="v"><nx-icon name="vright" size="24"></nx-icon>右视图</div>
          <div class="v"><nx-icon name="vleft" size="24"></nx-icon>左视图</div>
          <div class="v"><nx-icon name="vtop" size="24"></nx-icon>俯视图</div>
        </div>
        <div class="ruler"><nx-icon name="ruler" size="46"></nx-icon>测量</div>
      </nx-group>
      <div class="end">${drop()}</div>`;
  }
}
customElements.define("nx-ribbon", NxRibbon);

class NxDropdown extends HTMLElement {
  constructor() {
    super();
    this.attachShadow({ mode: "open" }).innerHTML = `
      <style>
        :host { display: flex; align-items: center; justify-content: space-between; height: 21px; box-sizing: border-box; border: 1px solid #777; padding: 0 6px 0 2px; flex: none; font-size: 11px; color: #222; background: #fff; }
      </style>
      <span><slot></slot></span>${drop()}`;
  }
  connectedCallback() { this.style.width = this.getAttribute("w") + "px"; }
}
customElements.define("nx-dropdown", NxDropdown);

class NxSelbar extends HTMLElement {
  constructor() {
    super();
    // icon, centre x in the window, has arrow; "|" entries are separators at an x
    const tools = [["selcube", 463, 0, 1], ["link", 488], ["filtgrid", 513, 1], ["snapdis", 548], ["wiretarget", 573], ["squaretarget", 598, 1], ["greycut", 639], ["greywire", 663], ["curve", 688], ["plaincube", 713], ["scurve", 738], ["facecube", 763], ["ringline", 788], ["bluedia", 813], ["cylplain", 838], ["cubeo2", 863], ["cubewire", 889], ["cubesolid", 913], ["|", 933], ["pmag", 953], ["pfit", 978], ["prot", 1002], ["gcube", 1028], ["gears", 1052], ["pframe", 1078, 1], ["bracket2", 1117, 1], ["cylshade", 1158, 1], ["eyelist", 1198, 1], ["|", 1231], ["ruler2", 1252], ["|", 1270]];
    let x = 445;
    const html = tools.map(t => {
      if (t[0] === "|") {
        const m = t[1] - x;
        x = t[1] + 1;
        return `<i class="sep" style="margin-left:${m}px"></i>`;
      }
      const left = t[1] - 12;
      const m = left - x;
      x = left + 24 + (t[2] ? 12 : 0);
      return `<span class="tool ${t[3] ? "on" : ""}" style="margin-left:${m}px"><nx-icon name="${t[0]}" size="${t[3] ? 17 : 19}"></nx-icon></span>${t[2] ? `<span class="ar">${drop()}</span>` : ""}`;
    }).join("");
    this.attachShadow({ mode: "open" }).innerHTML = `
      <style>
        :host { display: flex; align-items: center; height: 26px; flex: none; border-bottom: 2px solid #bbb; box-sizing: border-box; height: 28px; padding-top: 2px; position: relative; font-size: 11px; color: #222; }
        .ham { margin: 0 7px 0 13px; flex: none; }
        .menu { width: 47px; flex: none; display: flex; align-items: center; justify-content: space-between; }
        .tool { width: 24px; height: 24px; display: flex; align-items: center; justify-content: center; flex: none; }
        .on { background: #cfe3e9; }
        .ar { width: 12px; flex: none; display: flex; justify-content: center; }
        .sep { width: 1px; height: 22px; background: #ccc; flex: none; }
        .fn { width: 34px; display: flex; justify-content: center; flex: none; }
        .end { position: absolute; right: 4px; top: 13px; }
      </style>
      <svg class="ham" width="10" height="10"><path d="M0 1H10M0 5H10M0 9H10" stroke="#222"/></svg>
      <div class="menu"><span style="white-space:nowrap">菜单(<u>M</u>)</span>${drop()}</div>
      <i class="sep" style="margin:0 12px 0 11px"></i>
      <nx-dropdown w="149">无选择过滤器</nx-dropdown>
      <div class="fn"><nx-icon name="filt" size="18"></nx-icon></div>
      <nx-dropdown w="157">整个装配</nx-dropdown>
      ${html}
      <div class="end">${drop()}</div>`;
  }
}
customElements.define("nx-selbar", NxSelbar);

class NxResourceBar extends HTMLElement {
  constructor() {
    super();
    const items = [["gear", 18, 4, 0], ["assembly", 34, 27, 0], ["bracket", 34, 7, 1], ["bracketdim", 34, 7, 0], ["info", 34, 30, 0], ["globe", 32, 26, 0], ["clock", 32, 28, 0], ["rainbow", 32, 21, 0], ["mill", 32, 18, 0], ["tools", 32, 18, 0]];
    this.attachShadow({ mode: "open" }).innerHTML = `
      <style>
        :host { display: flex; flex-direction: column; align-items: center; width: 40px; flex: none; background: #dcdcdc; border-right: 1px solid #aaa; box-sizing: border-box; padding-left: 3px; }
        .it { display: flex; justify-content: center; flex: none; width: 100%; }
        .on { background: #fff; height: 54px; align-items: center; margin-left: 0; width: 37px; margin-right: -1px; border: 1px solid #bbb; border-right: none; box-sizing: border-box; }
      </style>
      ${items.map(i => `<div class="it ${i[3] ? "on" : ""}" style="margin-top:${i[2]}px"><nx-icon name="${i[0]}" size="${i[1]}"></nx-icon></div>`).join("")}`;
  }
}
customElements.define("nx-resource-bar", NxResourceBar);

const COLS = "198px 24px 24px 100px 19px";

class NxNavRow extends HTMLElement {
  connectedCallback() {
    if (this.shadowRoot) return;
    const specs = (this.getAttribute("icons") || "").split(",").filter(Boolean).map(s => s.split(":"));
    let x = 53;
    const icons = specs.map(([n, c, sz]) => {
      const left = +c - sz / 2;
      const html = `<nx-icon name="${n}" size="${sz}" style="margin-left:${left - x}px"></nx-icon>`;
      x = left + +sz;
      return html;
    }).join("");
    const lx = +this.getAttribute("lx") || x;
    const cls = this.getAttribute("kind") || "";
    this.attachShadow({ mode: "open" }).innerHTML = `
      <style>
        :host { display: grid; grid-template-columns: ${COLS}; height: 20px; box-sizing: border-box; border-bottom: 1px solid #ececec; flex: none; }
        :host(:nth-child(even)) { background: #f8f8f8; }
        .c { border-right: 1px solid #ececec; display: flex; align-items: center; justify-content: center; overflow: hidden; }
        .tree { justify-content: flex-start; white-space: nowrap; font-size: 12px; color: #333; }
        .dim { color: #aaa; }
        .bold { font-weight: bold; font-family: "DejaVu Sans", "Noto Sans CJK SC", sans-serif; font-size: 11.500px; color: #111; }
        .l { margin-left: ${lx - x}px; }
      </style>
      <div class="c tree">${icons}<span class="l ${cls}"><slot></slot></span></div>
      <div class="c">${this.hasAttribute("dep") ? `<nx-icon name="tree" size="14"></nx-icon>` : ""}</div>
      <div class="c">${this.hasAttribute("ok") ? `<nx-icon name="check" size="16"></nx-icon>` : ""}</div>
      <div class="c"></div><div class="c" style="border-right:none"></div>`;
  }
}
customElements.define("nx-nav-row", NxNavRow);

class NxNavigator extends HTMLElement {
  constructor() {
    super();
    const rows = [
      ["历史记录建模模式", "tclock:78:16", 90],
      ["模型视图", "plus:61:9,tview:79:16", 90],
      ["摄像机", "plus:61:9,check:77:16,cam:95:16", 106],
      ["非时间戳记几何体", "folder:79:16", 90],
      ["模型历史记录", "minus:61:9,ball:79:15,feat:95:16", 106, "ok"],
      ["实体 (0)", "eye:97:16,body:113:15", 125, "ok"],
      ["特征组 (4) \"CAM_WO...", "plus:80:9,eyeoff:97:16,fgroup:113:16", 125, "ok", "dim"],
      ["移动面 (5)", "eye:97:16,mvface:113:16", 125, "ok"],
      ["移动面 (6)", "eye:97:16,mvface:113:16", 125, "ok"],
      ["M18 X 1.5 螺纹孔 ...", "warn:97:16,holetool:113:15", 125, "ok dep", "bold"]
    ];
    let html = rows.map(r => `<nx-nav-row icons="${r[1]}" lx="${r[2]}" ${r[3] || ""} kind="${r[4] || ""}">${r[0].replace(/"/g, "&quot;")}</nx-nav-row>`).join("");
    html += "<nx-nav-row></nx-nav-row>".repeat(26);
    this.attachShadow({ mode: "open" }).innerHTML = `
      <style>
        :host { display: flex; flex-direction: column; width: 384px; flex: none; background: #fff; padding: 0 8px 0 6px; box-sizing: border-box; border-right: 1px solid #aaa; font-size: 12px; position: relative; }
        .head { display: flex; align-items: center; justify-content: space-between; height: 29px; flex: none; padding: 0 7px 0 4px; color: #333; }
        .head i { width: 10px; height: 8px; border: 1px solid #111; border-top-width: 2px; display: block; }
        .table { border: 1px solid #ddd; border-bottom: none; padding: 0 2px; flex: none; }
        .hdr { display: grid; grid-template-columns: ${COLS}; height: 20px; background: #ececec; border-bottom: 1px solid #ccc; box-sizing: border-box; align-items: center; }
        .hdr span { border-right: 1px solid #ccc; height: 20px; line-height: 19px; box-sizing: border-box; padding-left: 6px; color: #333; }
        .hdr svg { margin-left: 22px; }
        .rows { display: flex; flex-direction: column; }
        .lines { position: absolute; left: 0; top: 0; pointer-events: none; }
        .scroll { height: 4px; margin-top: 2px; background: #c4c4c4; border: 1px solid #aaa; flex: none; }
      </style>
      <div class="head"><span>部件导航器</span><i></i></div>
      <div class="table">
        <div class="hdr"><span>名称<svg width="9" height="5"><path d="M0 5H9L4.500 0Z" fill="#222"/></svg></span><span>当</span><span>最</span><span>附注</span><span style="border:none"></span></div>
        <div class="rows">${html}</div>
      </div>
      <div class="scroll"></div>
      <svg class="lines" width="384" height="270" fill="none" stroke="#999" stroke-dasharray="1 1">
        <path d="M17.500 60V136M17.500 60H25M23 80H27M23 100H24M17.500 120H27M36.500 146V250M36.500 170H42M42 210H46M36.500 230H44M36.500 250H44"/>
      </svg>`;
  }
}
customElements.define("nx-navigator", NxNavigator);

class NxModel extends HTMLElement {
  constructor() {
    super();
    // traced in 3x coordinates of the reference, the second tooth is a shifted copy of the first
    this.attachShadow({ mode: "open" }).innerHTML = `
      <style>:host { position: absolute; left: 250px; top: 216px; width: 440px; height: 380px; display: block; } svg { display: block; }</style>
      <svg width="440" height="380" viewBox="0 0 1320 1140">
        <defs>
          <linearGradient id="tube" x1="0" x2="1" y1="0" y2="0"><stop offset="0" stop-color="#d8a040"/><stop offset=".5" stop-color="#ffe07a"/><stop offset="1" stop-color="#d8a040"/></linearGradient>
          <linearGradient id="shade" x1="0" x2="1" y1="0" y2="0"><stop offset="0" stop-color="#ffcc55"/><stop offset=".7" stop-color="#ffcc55"/><stop offset="1" stop-color="#b88a35"/></linearGradient>
          <radialGradient id="sweep" gradientUnits="userSpaceOnUse" cx="45" cy="470" r="345"><stop offset=".7" stop-color="#ffcc55"/><stop offset=".85" stop-color="#ffea80"/><stop offset="1" stop-color="#c09038"/></radialGradient>
          <g id="tooth" stroke-linejoin="round">
            <path d="M92 830 132 834 485 842 487 370 470 320V230L455 205 380 195 300 160 250 70 225 48 200 68 160 105 150 125 135 320 130 370 65 485 60 770Z" fill="#ffcc55"/>
            <path d="M65 485 85 560 88 812 92 830 60 770Z" fill="#00a800"/>
            <path d="M152 125C160 100 185 88 205 78L234 165 245 215C235 270 190 320 137 325Z" fill="#00a800"/>
            <path d="M152 125C158 100 175 90 195 84 180 100 165 112 152 125Z" fill="#c4a050"/>
            <path d="M135 345 175 340 150 425 85 545 65 485C100 470 128 430 135 345Z" fill="#00a800"/>
            <path d="M248 70C270 130 310 185 380 195L445 197 432 240H380C320 222 280 190 264 155L246 100Z" fill="#00ee00"/>
            <path d="M175 322 205 292 218 312 180 325ZM140 350 170 340 158 372 146 368Z" fill="#00e040"/>
            <path d="M205 76Q225 55 248 70L268 155Q250 145 235 170Z" fill="url(#tube)"/>
            <path d="M235 170Q250 145 268 157C290 195 330 225 368 238L360 262C320 240 280 212 256 180 254 220 240 270 212 310L175 330 180 310C215 280 240 220 235 170Z" fill="#f7c454"/>
            <path d="M285 205 362 258 345 500 272 482Z" fill="url(#shade)"/>
            <path d="M350 500C335 620 240 750 92 812L88 728C170 690 255 590 272 482Z" fill="url(#sweep)"/>
            <path d="M136 372H172L170 430 150 430 135 430Z" fill="url(#tube)"/>
            <path d="M182 325 212 312 208 455 172 450Z" fill="url(#shade)"/>
            <path d="M85 585C120 560 155 510 172 450L180 458C160 520 125 570 88 598Z" fill="#00b000"/>
            <path d="M362 258Q382 232 400 240 415 240 425 262L420 510 402 518 345 500Z" fill="url(#tube)"/>
            <path d="M345 500 402 518C390 590 350 650 275 712L305 640 340 590Z" fill="#f2bd4c"/>
            <path d="M352 510C335 625 245 765 90 812L92 832C240 785 335 680 358 540Z" fill="#00b000"/>
            <path d="M425 240 440 225 470 232 466 440 445 450 435 490 420 515 430 262Z" fill="url(#tube)"/>
            <path d="M445 465 487 490V510L450 495Z" fill="#00e030"/>
            <path d="M420 515 440 505 487 540V560L450 555Z" fill="#f9d670"/>
            <path d="M368 236 385 228 420 240 430 262 425 240 400 235Z" fill="#00d000"/>
            <path d="M440 210Q455 190 470 215L455 222Z" fill="#f00"/>
            <path d="M200 68Q205 45 225 45 245 47 248 68 225 50 200 68Z" fill="#f00"/>
            <path d="M415 232Q425 220 437 238Z" fill="#f00"/>
            <path d="M473 318 485 320V345L476 340Z" fill="#e800d8"/>
            <path d="M460 368 476 336 487 346V370Z" fill="#ffe080" stroke="#333" stroke-width="1.500"/>
            <path d="M270 712 487 560 487 568 292 708Z" fill="#ffe080"/>
            <g fill="none" stroke="#2b2b40" stroke-width="1.800">
              <path d="M92 830 132 834 485 842 487 370M60 770 92 830M65 485 88 560V812M65 485 60 770"/>
              <path d="M285 205 272 482M362 258 345 500M272 482 345 490"/>
              <path d="M272 482C255 590 170 690 88 728M212 312 208 455C190 530 140 590 85 640M172 450 208 455"/>
              <path d="M172 450C150 500 120 540 85 565M135 430H170M150 370V430C130 480 105 520 80 545"/>
              <path d="M370 540C355 600 320 660 270 712"/>
              <path d="M400 245 402 518M425 250 422 510M440 228 435 490M458 228 455 450M470 232V440"/>
              <path d="M402 518 440 505 487 540M420 515 470 560M445 450 487 475"/>
              <path d="M270 712 487 560M292 708 487 568M132 812V834"/>
              <path d="M235 170Q250 145 268 157M285 195 300 180M205 76 235 170M248 70 268 157"/>
              <path d="M138 372H172"/>
            </g>
          </g>
        </defs>
        <path d="M22 763 1248 772 1260 848 1210 857 35 848Z" fill="#f000f0"/>
        <path d="M22 763 35 848V1078L22 1000Z" fill="#b000b8"/>
        <path d="M35 848 1210 857 1207 1087 35 1078Z" fill="#0048ff" stroke="#222" stroke-width="1"/>
        <path d="M1210 857 1260 848 1258 1080 1207 1087Z" fill="#f6b84a" stroke="#333" stroke-width="1"/>
        <use href="#tooth"/>
        <use href="#tooth" x="695" y="4"/>
      </svg>`;
  }
}
customElements.define("nx-model", NxModel);

class NxTriad extends HTMLElement {
  constructor() {
    super();
    this.attachShadow({ mode: "open" }).innerHTML = `
      <style>
        :host { position: absolute; left: 0; top: 556px; width: 160px; height: 130px; display: block; }
        span { position: absolute; font: 11px "Liberation Sans", sans-serif; }
        svg { position: absolute; left: 0; top: 0; }
      </style>
      <svg width="160" height="130">
        <path d="M82 75H122V118H82Z" fill="#eceded" stroke="#bbb" stroke-width="1.500"/><path d="M82 79H122" stroke="#ccc"/>
        <path d="M101 77V46H106V77Z" fill="#b32a2a"/><path d="M103.500 28 98 47H109Z" fill="#c22c2c"/>
        <path d="M82 95V99H50V101L32 97 50 92V95Z" fill="#2f9231"/>
        <path d="M103 98Q110 104 102 109 96 103 103 98Z" fill="#0a3ae0"/><path d="M100 111H107" stroke="#8aa0e8"/>
      </svg>
      <span style="left:99px;top:11px;color:#c9504f">X</span>
      <span style="left:19px;top:90px;color:#5aa86a">Y</span>`;
  }
}
customElements.define("nx-triad", NxTriad);

class NxViewport extends HTMLElement {
  constructor() {
    super();
    this.attachShadow({ mode: "open" }).innerHTML = `
      <style>
        :host { display: flex; flex-direction: column; flex: none; width: 1230px; }
        .strip { height: 24px; flex: none; display: flex; border-bottom: 2px solid #0a6f97; box-sizing: content-box; }
        .tab { width: 109px; background: #05719a; color: #fff; font-size: 11px; display: flex; align-items: center; gap: 5px; padding-left: 5px; box-sizing: border-box; }
        .tab b { font-weight: normal; width: 47px; margin-right: 0; white-space: nowrap; }
        .view { flex: 1; position: relative; background: linear-gradient(#bec0c3, #e8e9eb 70%); }
      </style>
      <div class="strip"><div class="tab"><nx-icon name="partfile" size="16"></nx-icon><b>1_x_t.prt</b><nx-icon name="newwin" size="11" style="margin-left:1px"></nx-icon>
        <svg width="10" height="10" stroke="#fff" stroke-width="2"><path d="M1 1 9 9M9 1 1 9"/></svg></div></div>
      <div class="view"><nx-model></nx-model><nx-triad></nx-triad></div>`;
  }
}
customElements.define("nx-viewport", NxViewport);

class NxRightBar extends HTMLElement {
  constructor() {
    super();
    const ic = ["move", "del", "replace", "chamsize", "mirrorface", "holesize", "optimize", "offset", "blendsize", "cycle"];
    this.attachShadow({ mode: "open" }).innerHTML = `
      <style>
        :host { display: flex; flex-direction: column; align-items: center; flex: 1; padding-top: 14px; gap: 7.500px; position: relative; }
        .a { margin-top: -5px; }
        .line { width: 28px; height: 1px; background: #ddd; margin-top: 4px; }
        .bottom { position: absolute; left: 8px; bottom: 6px; }
      </style>
      ${ic.map(n => `<nx-icon name="${n}" size="24"></nx-icon>`).join("")}
      <div class="a">${drop()}</div><div class="line"></div>
      <svg class="bottom" width="5" height="7"><path d="M5 0V7L0 3.500Z" fill="#222"/></svg>`;
  }
}
customElements.define("nx-right-bar", NxRightBar);

class NxMain extends HTMLElement {
  constructor() {
    super();
    this.attachShadow({ mode: "open" }).innerHTML = `
      <style>:host { display: flex; flex: none; height: 782px; border-bottom: 1px solid #aaa; box-sizing: content-box; } .gap { width: 2px; flex: none; }</style>
      <nx-resource-bar></nx-resource-bar><nx-navigator></nx-navigator><div class="gap"></div>
      <nx-viewport></nx-viewport><nx-right-bar></nx-right-bar>`;
  }
}
customElements.define("nx-main", NxMain);

class NxStatus extends HTMLElement {
  constructor() {
    super();
    this.attachShadow({ mode: "open" }).innerHTML = `
      <style>
        :host { display: block; flex: 1; position: relative; background: #fff; }
        .wm { position: absolute; right: -5px; bottom: -1px; width: 165px; white-space: nowrap; font: 14px "Liberation Mono", "Noto Sans CJK SC", monospace; color: #666; line-height: 17px; }
        .wm span { font-size: 15px; letter-spacing: .6px; }
      </style>
      <div class="wm">UG<span>爱好者论坛</span>@Lee123a</div>`;
  }
}
customElements.define("nx-status", NxStatus);
</script>
</body>
</html>
